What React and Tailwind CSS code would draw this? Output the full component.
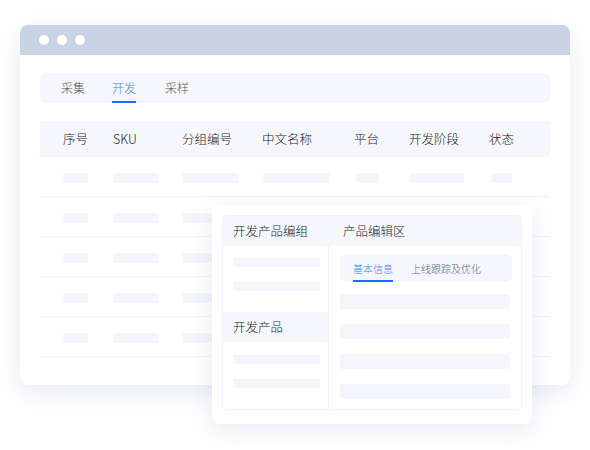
const font = { fontFamily: '"Noto Sans CJK SC", "Noto Sans", sans-serif' };

const COLS = [
  { label: "序号", x: 23, bar: 25, bx: 23 },
  { label: "SKU", x: 73, bar: 46, bx: 73 },
  { label: "分组编号", x: 142, bar: 57, bx: 142 },
  { label: "中文名称", x: 222, bar: 67, bx: 223 },
  { label: "平台", x: 314, bar: 23, bx: 316 },
  { label: "开发阶段", x: 369, bar: 54, bx: 370 },
  { label: "状态", x: 449, bar: 21, bx: 451 },
];

function Bar({ w, h = 10, className = "" }) {
  return <div className={`bg-[#f4f6fb] ${className}`} style={{ width: w, height: h }} />;
}

function TableRow() {
  return (
    <div className="relative h-[40px] border-b border-[#eff1f6]">
      {COLS.map((c) => (
        <div key={c.label} className="absolute top-[16px]" style={{ left: c.bx }}>
          <Bar w={c.bar} />
        </div>
      ))}
    </div>
  );
}

function Popup() {
  return (
    <div className="absolute left-[212px] top-[205px] h-[219px] w-[320px] rounded-[6px] bg-white p-[10px] shadow-[0_6px_24px_rgba(70,90,160,0.13)]">
      <div className="flex h-[195px] w-[300px] flex-col overflow-hidden rounded-[4px] border border-[#eef0f6]">
        <div className="flex h-[30px] shrink-0 items-center bg-[#f5f7fc] text-[12.5px] text-[#1c1c1c]">
          <div className="w-[109px] pl-[10px]">开发产品编组</div>
          <div className="pl-[11px]">产品编辑区</div>
        </div>
        <div className="flex flex-1">
          <div className="flex w-[109px] flex-col border-r border-[#eef0f6]">
            <div className="flex flex-col gap-[15px] pl-[10px] pt-[12px]">
              <Bar w={87} h={9} />
              <Bar w={87} h={9} />
            </div>
            <div className="mt-[21px] flex h-[30px] items-center bg-[#f5f7fc] pl-[10px] text-[12.5px] text-[#1c1c1c]">
              开发产品
            </div>
            <div className="flex flex-col gap-[15px] pl-[10px] pt-[13px]">
              <Bar w={87} h={9} />
              <Bar w={87} h={9} />
            </div>
          </div>
          <div className="flex flex-1 flex-col pl-[11px] pr-[9px] pt-[8px]">
            <div className="flex h-[28px] w-[172px] items-end gap-[18px] rounded-[6px] bg-[#f5f7fc] pl-[13px] text-[10px]">
              <div className="flex h-full flex-col justify-center border-b-[2px] border-[#1f6bff] pt-[2px] text-[#4a84f5]">
                基本信息
              </div>
              <div className="flex h-full flex-col justify-center text-[#666]">上线跟踪及优化</div>
            </div>
            <div className="mt-[12px] flex flex-col gap-[15px]">
              <Bar w={170} h={15} />
              <Bar w={170} h={15} />
              <Bar w={170} h={15} />
              <Bar w={170} h={15} />
            </div>
          </div>
        </div>
      </div>
    </div>
  );
}

export default function App() {
  return (
    <div className="relative h-[450px] w-[590px] overflow-hidden bg-white font-light" style={font}>
      <div className="ml-[20px] mt-[25px] h-[360px] w-[550px] overflow-hidden rounded-[8px] bg-white shadow-[0_8px_26px_rgba(70,90,160,0.12)]">
        <div className="flex h-[30px] items-center gap-[8px] bg-[#cad2e5] pl-[19px]">
          <span className="h-[10px] w-[10px] rounded-full bg-white" />
          <span className="h-[10px] w-[10px] rounded-full bg-white" />
          <span className="h-[10px] w-[10px] rounded-full bg-white" />
        </div>
        <div className="px-[20px] pt-[18px]">
          <div className="flex h-[30px] items-stretch rounded-[6px] bg-[#f5f7fc] pl-[21px] text-[12px]">
            <div className="flex items-center text-[#555]">采集</div>
            <div className="ml-[27px] flex items-center border-b-[2px] border-[#1f6bff] pt-[2px] text-[#4a84f5]">开发</div>
            <div className="ml-[29px] flex items-center text-[#555]">采样</div>
          </div>
          <div className="mt-[18px]">
            <div className="relative h-[36px] bg-[#f5f7fc] text-[12.5px] text-[#1c1c1c]">
              {COLS.map((c) => (
                <div key={c.label} className="absolute top-0 flex h-full items-center" style={{ left: c.x }}>
                  {c.label}
                </div>
              ))}
            </div>
            <TableRow />
            <TableRow />
            <TableRow />
            <TableRow />
            <TableRow />
          </div>
        </div>
      </div>
      <Popup />
    </div>
  );
}
